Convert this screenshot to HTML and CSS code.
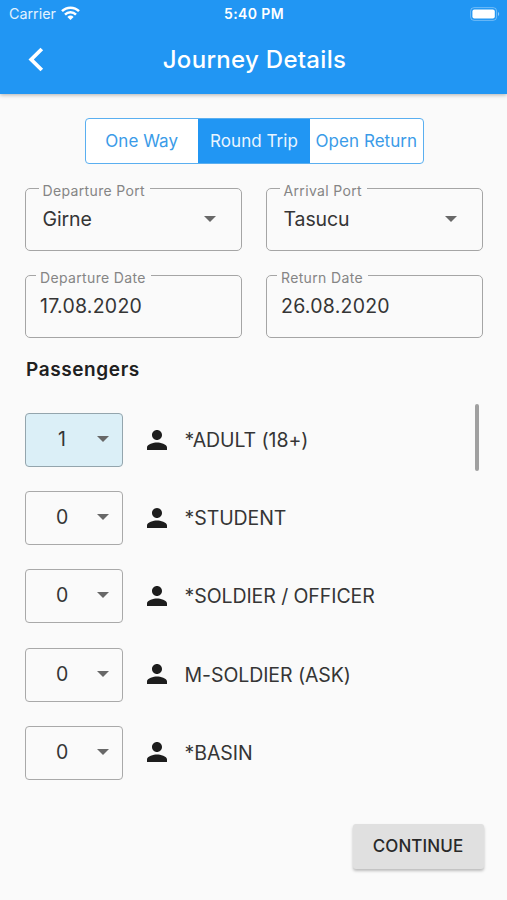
FILE: index.html
```html
<!DOCTYPE html>
<html lang="en">
<head>
<meta charset="utf-8">
<title>Journey Details</title>
<link rel="stylesheet" href="styles.css">
</head>
<body>
<svg class="defs" width="0" height="0" aria-hidden="true">
  <symbol id="person" viewBox="4 4 16 16"><path d="M12 12c2.21 0 4-1.79 4-4s-1.79-4-4-4-4 1.79-4 4 1.79 4 4 4zm0 2c-2.67 0-8 1.34-8 4v2h16v-2c0-2.66-5.33-4-8-4z"/></symbol>
  <symbol id="caret" viewBox="0 0 12 6"><path d="M0 0h12L6 6z"/></symbol>
</svg>
<header class="app-header">
  <div class="status">
    <div class="carrier"><span>Carrier</span>
      <svg class="wifi" viewBox="0 0 19 14"><g fill="none" stroke="#fff" stroke-width="2.5"><path d="M1 5.2a12 12 0 0 1 17 0"/><path d="M4 8.6a7.8 7.8 0 0 1 11 0"/></g><path fill="#fff" d="M6.4 10.9a4.4 4.4 0 0 1 6.2 0L9.5 14z"/></svg>
    </div>
    <div class="time">5:40 PM</div>
    <svg class="battery" viewBox="0 0 30 14"><rect x=".6" y=".6" width="26" height="12.8" rx="3.5" fill="none" stroke="#fff" stroke-opacity=".35"/><rect x="2.4" y="2.4" width="22.4" height="9.2" rx="2" fill="#fff"/><path d="M28 5v4c1.6-.6 1.6-3.4 0-4z" fill="#fff" fill-opacity=".5"/></svg>
  </div>
  <div class="toolbar">
    <svg class="back" viewBox="0 0 16 25"><path d="M13.8 2 3.2 12.5 13.8 23" fill="none" stroke="#fff" stroke-width="3.8"/></svg>
    <h1>Journey Details</h1>
  </div>
</header>
<main>
  <div class="tabs">
    <div class="tab">One Way</div>
    <div class="tab active">Round Trip</div>
    <div class="tab">Open Return</div>
  </div>
  <div class="fields">
    <fieldset class="field port"><legend>Departure Port</legend><div class="value"><span>Girne</span><svg class="caret"><use href="#caret"/></svg></div></fieldset>
    <fieldset class="field port"><legend>Arrival Port</legend><div class="value"><span>Tasucu</span><svg class="caret"><use href="#caret"/></svg></div></fieldset>
    <fieldset class="field date"><legend>Departure Date</legend><div class="value">17.08.2020</div></fieldset>
    <fieldset class="field date"><legend>Return Date</legend><div class="value">26.08.2020</div></fieldset>
  </div>
  <h2>Passengers</h2>
  <div class="passengers">
    <div class="list">
      <div class="row"><div class="count selected"><span>1</span><svg class="caret"><use href="#caret"/></svg></div><svg class="person"><use href="#person"/></svg><span class="kind">*ADULT (18+)</span></div>
      <div class="row"><div class="count"><span>0</span><svg class="caret"><use href="#caret"/></svg></div><svg class="person"><use href="#person"/></svg><span class="kind">*STUDENT</span></div>
      <div class="row"><div class="count"><span>0</span><svg class="caret"><use href="#caret"/></svg></div><svg class="person"><use href="#person"/></svg><span class="kind">*SOLDIER / OFFICER</span></div>
      <div class="row"><div class="count"><span>0</span><svg class="caret"><use href="#caret"/></svg></div><svg class="person"><use href="#person"/></svg><span class="kind">M-SOLDIER (ASK)</span></div>
      <div class="row"><div class="count"><span>0</span><svg class="caret"><use href="#caret"/></svg></div><svg class="person"><use href="#person"/></svg><span class="kind">*BASIN</span></div>
    </div>
    <div class="thumb"></div>
  </div>
  <div class="actions"><button>CONTINUE</button></div>
</main>
</body>
</html>
```
FILE: styles.css
```css
* { box-sizing: border-box; }
body { margin: 0; height: 900px; overflow: hidden; background: #fafafa; color: #353535; font-family: Inter, "Liberation Sans", sans-serif; }
svg { display: block; flex: none; }
.defs { display: none; }
.app-header { height: 94px; background: #2196f3; color: #fff; box-shadow: 0 1px 4px rgba(0,0,0,.3); }
.status { display: grid; grid-template-columns: 1fr auto 1fr; align-items: center; height: 27px; padding: 0 8px 0 9px; }
.carrier { display: flex; align-items: center; gap: 5px; font-size: 14.3px; color: #e3f2fe; }
.wifi { width: 19px; height: 14px; margin-top: -2px; }
.time { font-size: 14px; font-weight: 600; letter-spacing: .4px; }
.battery { width: 30px; height: 14px; justify-self: end; margin-right: -1px; }
.toolbar { display: grid; grid-template-columns: 1fr auto 1fr; align-items: center; height: 66px; }
.back { width: 16px; height: 25px; margin: -2px 0 0 28px; }
h1 { margin: 0 -1px 0 1px; font-size: 24px; font-weight: 500; letter-spacing: .3px; line-height: 30px; }
main { padding: 24px 25px 0; }
.tabs { display: grid; grid-template-columns: repeat(3, 1fr); width: 339px; height: 46px; margin: 0 0 0 59.5px; border: 1px solid #5aaff0; border-radius: 4px; background: #fff; overflow: hidden; }
.tab { display: flex; align-items: center; justify-content: center; color: #3a9be8; font-size: 17px; letter-spacing: .05px; white-space: nowrap; }
.tab.active { background: #2196f3; color: #e9f5ff; }
.fields { display: grid; grid-template-columns: 217px 217px; column-gap: 24px; row-gap: 14px; margin-top: 14px; }
.field { min-width: 0; height: 73px; margin: 0; border: 1px solid #a5a5a5; border-radius: 5px; padding: 0 0 0 12.5px; }
.field.date { padding-left: 10px; }
legend { height: 21px; padding: 5px 5px 0 4px; color: #858585; font-size: 14px; line-height: 15px; letter-spacing: .35px; white-space: nowrap; }
.value { display: flex; align-items: center; justify-content: space-between; height: 40px; padding: 0 25px 0 4px; font-size: 19.5px; letter-spacing: -.1px; }
.date .value { letter-spacing: .25px; }
.caret { width: 12px; height: 6px; fill: #686868; }
h2 { margin: 20px 0 0 1px; color: #202020; font-size: 19px; font-weight: 600; line-height: 24px; letter-spacing: .6px; }
.passengers { display: flex; justify-content: space-between; margin-top: 22px; }
.list { display: grid; gap: 24.2px; padding-top: 9px; }
.row { display: flex; align-items: center; height: 54px; }
.count { display: flex; align-items: center; width: 98px; height: 54px; border: 1px solid #a9a9a9; border-radius: 4px; font-size: 19.5px; }
.count.selected { background: #dbeff7; border-color: #94a5ad; }
.count span { width: 12px; margin: -2px 28.5px 0 30px; text-align: center; }
.count .caret { margin-top: -2px; }
.person { width: 20px; height: 20px; margin: -1px 0 0 24px; fill: #1d1d1d; }
.kind { margin-left: 17.5px; font-size: 19.5px; letter-spacing: -.07px; white-space: nowrap; }
.thumb { width: 4px; height: 67px; margin-right: 3px; border-radius: 2px; background: #a0a0a0; }
.actions { display: flex; justify-content: flex-end; margin: 44px -2px 0 0; }
button { width: 131px; height: 45px; border: 0; padding: 0 1px 0 0; border-radius: 3px; background: #e0e0e0; color: #292929; font: 500 17px Inter, sans-serif; letter-spacing: .1px; box-shadow: 0 2px 3px rgba(0,0,0,.25); }
```
